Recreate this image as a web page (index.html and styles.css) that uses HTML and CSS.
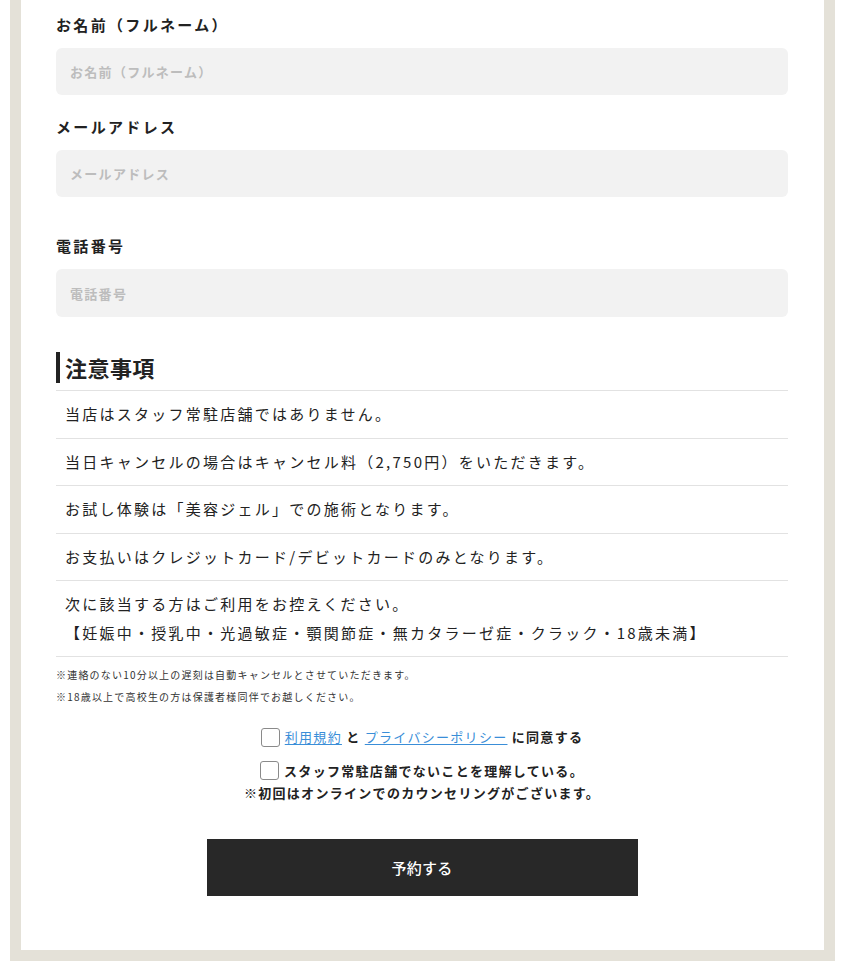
FILE: index.html
```html
<!DOCTYPE html>
<html lang="ja">
<head>
<meta charset="utf-8">
<title>予約フォーム</title>
<link rel="stylesheet" href="styles.css">
</head>
<body>
<div class="frame">
  <form class="inner">
    <div class="group">
      <label class="label" for="name">お名前（フルネーム）</label>
      <input class="field" id="name" type="text" placeholder="お名前（フルネーム）">
    </div>
    <div class="group group-email">
      <label class="label" for="mail">メールアドレス</label>
      <input class="field" id="mail" type="email" placeholder="メールアドレス">
    </div>
    <div class="group">
      <label class="label" for="tel">電話番号</label>
      <input class="field field-tall" id="tel" type="tel" placeholder="電話番号">
    </div>

    <h2 class="heading">注意事項</h2>
    <ul class="notes">
      <li>当店はスタッフ常駐店舗ではありません。</li>
      <li>当日キャンセルの場合はキャンセル料（2,750円）をいただきます。</li>
      <li>お試し体験は「美容ジェル」での施術となります。</li>
      <li>お支払いはクレジットカード/デビットカードのみとなります。</li>
      <li>次に該当する方はご利用をお控えください。<br>【妊娠中・授乳中・光過敏症・顎関節症・無カタラーゼ症・クラック・18歳未満】</li>
    </ul>
    <p class="small">※連絡のない10分以上の遅刻は自動キャンセルとさせていただきます。</p>
    <p class="small">※18歳以上で高校生の方は保護者様同伴でお越しください。</p>

    <div class="agree">
      <label class="check-line"><span class="box"></span><a href="#" class="link">利用規約</a> と <a href="#" class="link">プライバシーポリシー</a> に同意する</label>
      <label class="check-line check-second"><span class="box"></span>スタッフ常駐店舗でないことを理解している。</label>
      <p class="check-note">※初回はオンラインでのカウンセリングがございます。</p>
    </div>

    <div class="submit-wrap">
      <button type="button" class="submit">予約する</button>
    </div>
  </form>
</div>
</body>
</html>
```

FILE: styles.css
```css
* {
  box-sizing: border-box;
}

html, body {
  margin: 0;
  padding: 0;
  background: #ffffff;
}

body {
  font-family: "Noto Sans CJK JP", "Noto Sans", sans-serif;
  color: #222222;
}

.frame {
  width: 825px;
  margin-left: 10px;
  border: 11px solid #e4e1d8;
  border-top: none;
  background: #ffffff;
}

.inner {
  padding: 14px 36px 54px 35px;
  margin: 0;
}

.group {
  margin-bottom: 21px;
}

.group-email {
  margin-bottom: 38px;
}

.label {
  display: block;
  font-size: 15px;
  font-weight: 700;
  letter-spacing: 0.155em;
  line-height: 22px;
  margin-bottom: 12px;
}

.field {
  display: block;
  width: 100%;
  height: 47px;
  border: none;
  border-radius: 6px;
  background: #f2f2f2;
  padding: 0 14px;
  font-family: inherit;
  font-size: 13px;
  font-weight: 700;
  letter-spacing: 0.1em;
  outline: none;
}

.field-tall {
  height: 48px;
}

.field::placeholder {
  color: #bdbdbd;
}

.heading {
  margin: 35px 0 7px;
  border-left: 4px solid #222222;
  padding-left: 5px;
  font-size: 22px;
  font-weight: 700;
  line-height: 31px;
  letter-spacing: 0.02em;
}

.notes {
  list-style: none;
  margin: 0;
  padding: 0;
  border-top: 1px solid #e2e2e2;
}

.notes li {
  border-bottom: 1px solid #e2e2e2;
  padding: 9px 0 9px 9px;
  font-size: 15px;
  line-height: 28.5px;
  letter-spacing: 0.15em;
}

.small {
  margin: 0;
  font-size: 10px;
  line-height: 22px;
  letter-spacing: 0.12em;
  color: #333333;
}

.notes + .small {
  margin-top: 7px;
}

.agree {
  margin-top: 18px;
  display: flex;
  flex-direction: column;
  align-items: center;
}

.check-line {
  display: flex;
  align-items: center;
  font-size: 13px;
  font-weight: 700;
  letter-spacing: 0.1em;
  line-height: 22px;
  white-space: pre;
}

.check-second {
  margin-top: 11px;
  line-height: 23px;
}

.box {
  display: inline-block;
  width: 19px;
  height: 19px;
  border: 1px solid #8a8a8a;
  border-radius: 3px;
  background: #ffffff;
  margin-right: 5px;
}

.link {
  color: #3a8ed8;
  font-weight: 400;
  text-decoration: underline;
  text-underline-offset: 2px;
}

.check-note {
  margin: -1px 0 0;
  font-size: 13px;
  font-weight: 700;
  letter-spacing: 0.1em;
  line-height: 23px;
}

.submit-wrap {
  display: flex;
  justify-content: center;
  margin-top: 35px;
}

.submit {
  width: 431px;
  height: 57px;
  border: none;
  background: #282828;
  color: #ffffff;
  font-family: inherit;
  font-size: 15px;
  font-weight: 500;
  letter-spacing: 0.02em;
}
```
